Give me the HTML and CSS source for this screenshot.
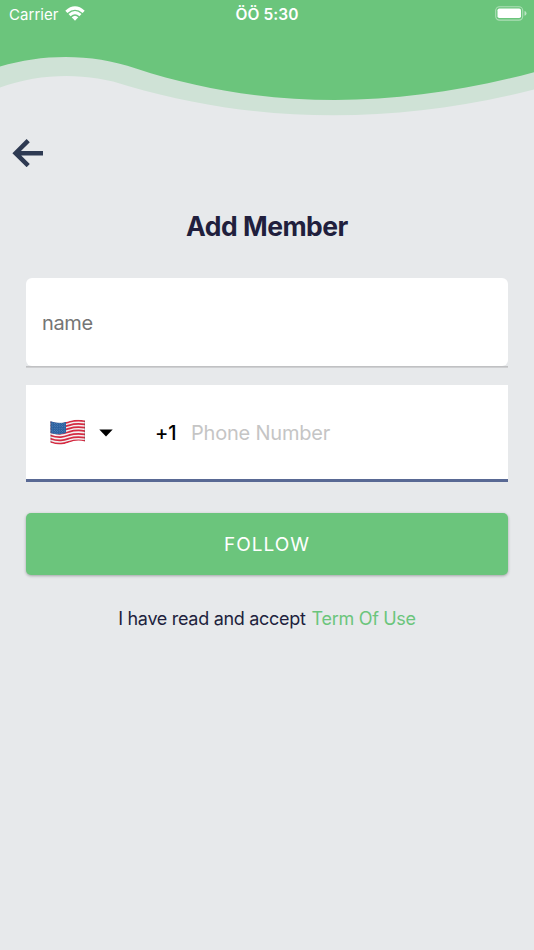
FILE: index.html
```html
<!DOCTYPE html>
<html lang="en">
<head>
<meta charset="utf-8">
<title>Add Member</title>
<link rel="stylesheet" href="styles.css">
</head>
<body>
<header class="top">
  <svg class="wave" viewBox="0 0 534 120" aria-hidden="true">
    <path fill="#cfe2d6" d="M0 0V87.500C42 72.500 88 72.500 128 86C262 125 397 124 534 89.500V0Z"/>
    <path fill="#6bc57c" d="M0 0V66.500C44 53.500 92 53.500 136 68.500C262 110 397 109.500 534 72.200V0Z"/>
  </svg>
  <div class="status">
    <div class="carrier"><span>Carrier</span>
      <svg class="wifi" viewBox="0 0 20 15" aria-hidden="true">
        <path d="M.3 4.700Q10-4.200 19.700 4.700L17.600 7Q10 .6 2.400 7Z"/>
        <path d="M3.500 8Q10 2 16.500 8L14.400 10.200Q10 6.500 5.600 10.200Z"/>
        <path d="M6.700 11.200Q10 8.200 13.300 11.200L10 14.700Z"/>
      </svg>
    </div>
    <span class="clock">ÖÖ 5:30</span>
    <svg class="battery" viewBox="0 0 32 15" aria-hidden="true">
      <rect x=".7" y=".7" width="27" height="13.400" rx="3.800" fill="none" stroke="#fff" stroke-opacity=".45" stroke-width="1.100"/>
      <rect x="2.500" y="2.500" width="23.500" height="9.600" rx="1.800" fill="#fff"/>
      <path d="M29.500 5Q31.500 5.500 31.500 7.400T29.500 9.800Z" fill="#fff" fill-opacity=".55"/>
    </svg>
  </div>
</header>
<main class="content">
  <button class="back" aria-label="Back">
    <svg viewBox="0 0 32 28" width="32" height="28"><path d="M16.200 1.600L3.600 14.200L16.200 26.600M3.600 14.200H31" fill="none" stroke="#2e3a52" stroke-width="4.500"/></svg>
  </button>
  <h1 class="title">Add Member</h1>
  <form class="form">
    <div class="underline"><div class="field name"><span>name</span></div></div>
    <div class="field phone">
      <svg class="flag" viewBox="0 0 36 26" aria-hidden="true">
        <defs>
          <clipPath id="cloth"><path d="M.5 2.200C9 4.700 14 3.800 19 2.200S29 .2 35 1.500V22.500C29 20.500 24 21.500 19 23.500S8 27 .5 23.500Z"/></clipPath>
          <pattern id="stars" width="2.400" height="2.400" patternUnits="userSpaceOnUse"><circle cx=".6" cy=".6" r=".38" fill="#a9c3de"/><circle cx="1.800" cy="1.800" r=".38" fill="#a9c3de"/></pattern>
        </defs>
        <g clip-path="url(#cloth)">
          <path fill="#f4f1f2" d="M0 0H36V26H0Z"/>
          <g fill="none" stroke="#d52b42" stroke-width="1.750">
            <path d="M0 3C9 6.300 14 4.600 19 3S29 1 36 2.300"/>
            <path d="M0 6.300C9 9.600 14 7.900 19 6.300S29 4.300 36 5.600"/>
            <path d="M0 9.600C9 12.900 14 11.200 19 9.600S29 7.600 36 8.900"/>
            <path d="M0 12.900C9 16.200 14 14.500 19 12.900S29 10.900 36 12.200"/>
            <path d="M0 16.200C9 19.500 14 17.800 19 16.200S29 14.200 36 15.500"/>
            <path d="M0 19.500C9 22.800 14 21.100 19 19.500S29 17.500 36 18.800"/>
            <path d="M0 22.800C9 26.100 14 24.400 19 22.800S29 20.800 36 22.100"/>
          </g>
          <path fill="#245b9d" d="M0 1C8 4 12 4 16 2.500V13.800C12 15.500 7 16 0 14Z"/>
          <path fill="url(#stars)" d="M0 1C8 4 12 4 16 2.500V13.800C12 15.500 7 16 0 14Z"/>
          <path d="M.8 0V26M34.800 0V26" stroke="#5b4b55" stroke-opacity=".5" stroke-width=".8"/>
        </g>
      </svg>
      <svg class="caret" viewBox="0 0 14 8" aria-hidden="true"><path d="M.3.500H13.700L7 7.500Z"/></svg>
      <span class="code">+1</span>
      <span class="number">Phone Number</span>
    </div>
    <button class="follow" type="button">FOLLOW</button>
  </form>
  <p class="terms"><span class="accept">I have read and accept</span><a class="link">Term Of Use</a></p>
</main>
</body>
</html>
```
FILE: styles.css
```css
* { box-sizing: border-box; }
body {
  margin: 0;
  min-height: 950px;
  background: #e7e9eb;
  color: #211f3d;
  font-family: Inter, "Liberation Sans", sans-serif;
}
button { border: 0; padding: 0; background: none; font-family: inherit; }
.top { display: grid; height: 120px; }
.wave { grid-area: 1 / 1; display: block; width: 534px; height: 120px; }
.status {
  grid-area: 1 / 1;
  display: grid;
  grid-template-columns: 1fr auto 1fr;
  align-items: center;
  height: 28px;
  padding: 0 7px 0 9px;
  color: #fff;
  font-size: 15.500px;
}
.carrier { display: flex; align-items: center; gap: 6px; font-size: 15px; letter-spacing: 0.050px; }
.wifi { width: 20px; height: 15px; fill: #fff; margin-top: -2px; }
.clock { font-weight: 600; letter-spacing: 0.100px; transform: translateX(-1px); }
.battery { width: 32px; height: 15px; justify-self: end; margin-top: -1px; }
.content { padding: 19px 26px 0; }
.back { display: block; width: 32px; height: 28px; margin-left: -14px; }
.title {
  margin: 42px 0 0;
  height: 34px;
  line-height: 34px;
  text-align: center;
  font-size: 26.500px;
  font-weight: 700;
  letter-spacing: -0.500px;
}
.form { display: flex; flex-direction: column; margin-top: 35px; }
.field { display: flex; align-items: center; background: #fff; font-size: 20px; letter-spacing: -0.200px; }
.underline {
  height: 90px;
  padding-bottom: 2px;
  background: linear-gradient(#b9babc, #d5d6d8) bottom / 100% 2px no-repeat;
}
.name {
  height: 88px;
  padding: 2px 16px 0;
  border-radius: 6px;
  color: #757575;
  letter-spacing: -0.350px;
}
.phone { height: 97px; margin-top: 17px; padding-left: 24px; border-bottom: 3px solid #596994; }
.flag { width: 36px; height: 26px; }
.caret { width: 14px; height: 8px; margin-left: 13px; margin-top: 1px; }
.code { width: 36px; margin: 2px 0 0 42px; color: #000; font-weight: 500; }
.number { margin-top: 2px; color: #c5c5c5; }
.follow {
  height: 62px;
  margin-top: 31px;
  border-radius: 5px;
  background: #6bc57c;
  box-shadow: 0 1px 3px rgba(0, 0, 0, 0.300);
  color: #fff;
  font-size: 19px;
  letter-spacing: 1.050px;
}
.terms {
  display: flex;
  justify-content: center;
  gap: 6px;
  margin: 32px 0 0;
  font-size: 18px;
  line-height: 24px;
  letter-spacing: -0.300px;
}
.link { color: #6bc57c; }
```
